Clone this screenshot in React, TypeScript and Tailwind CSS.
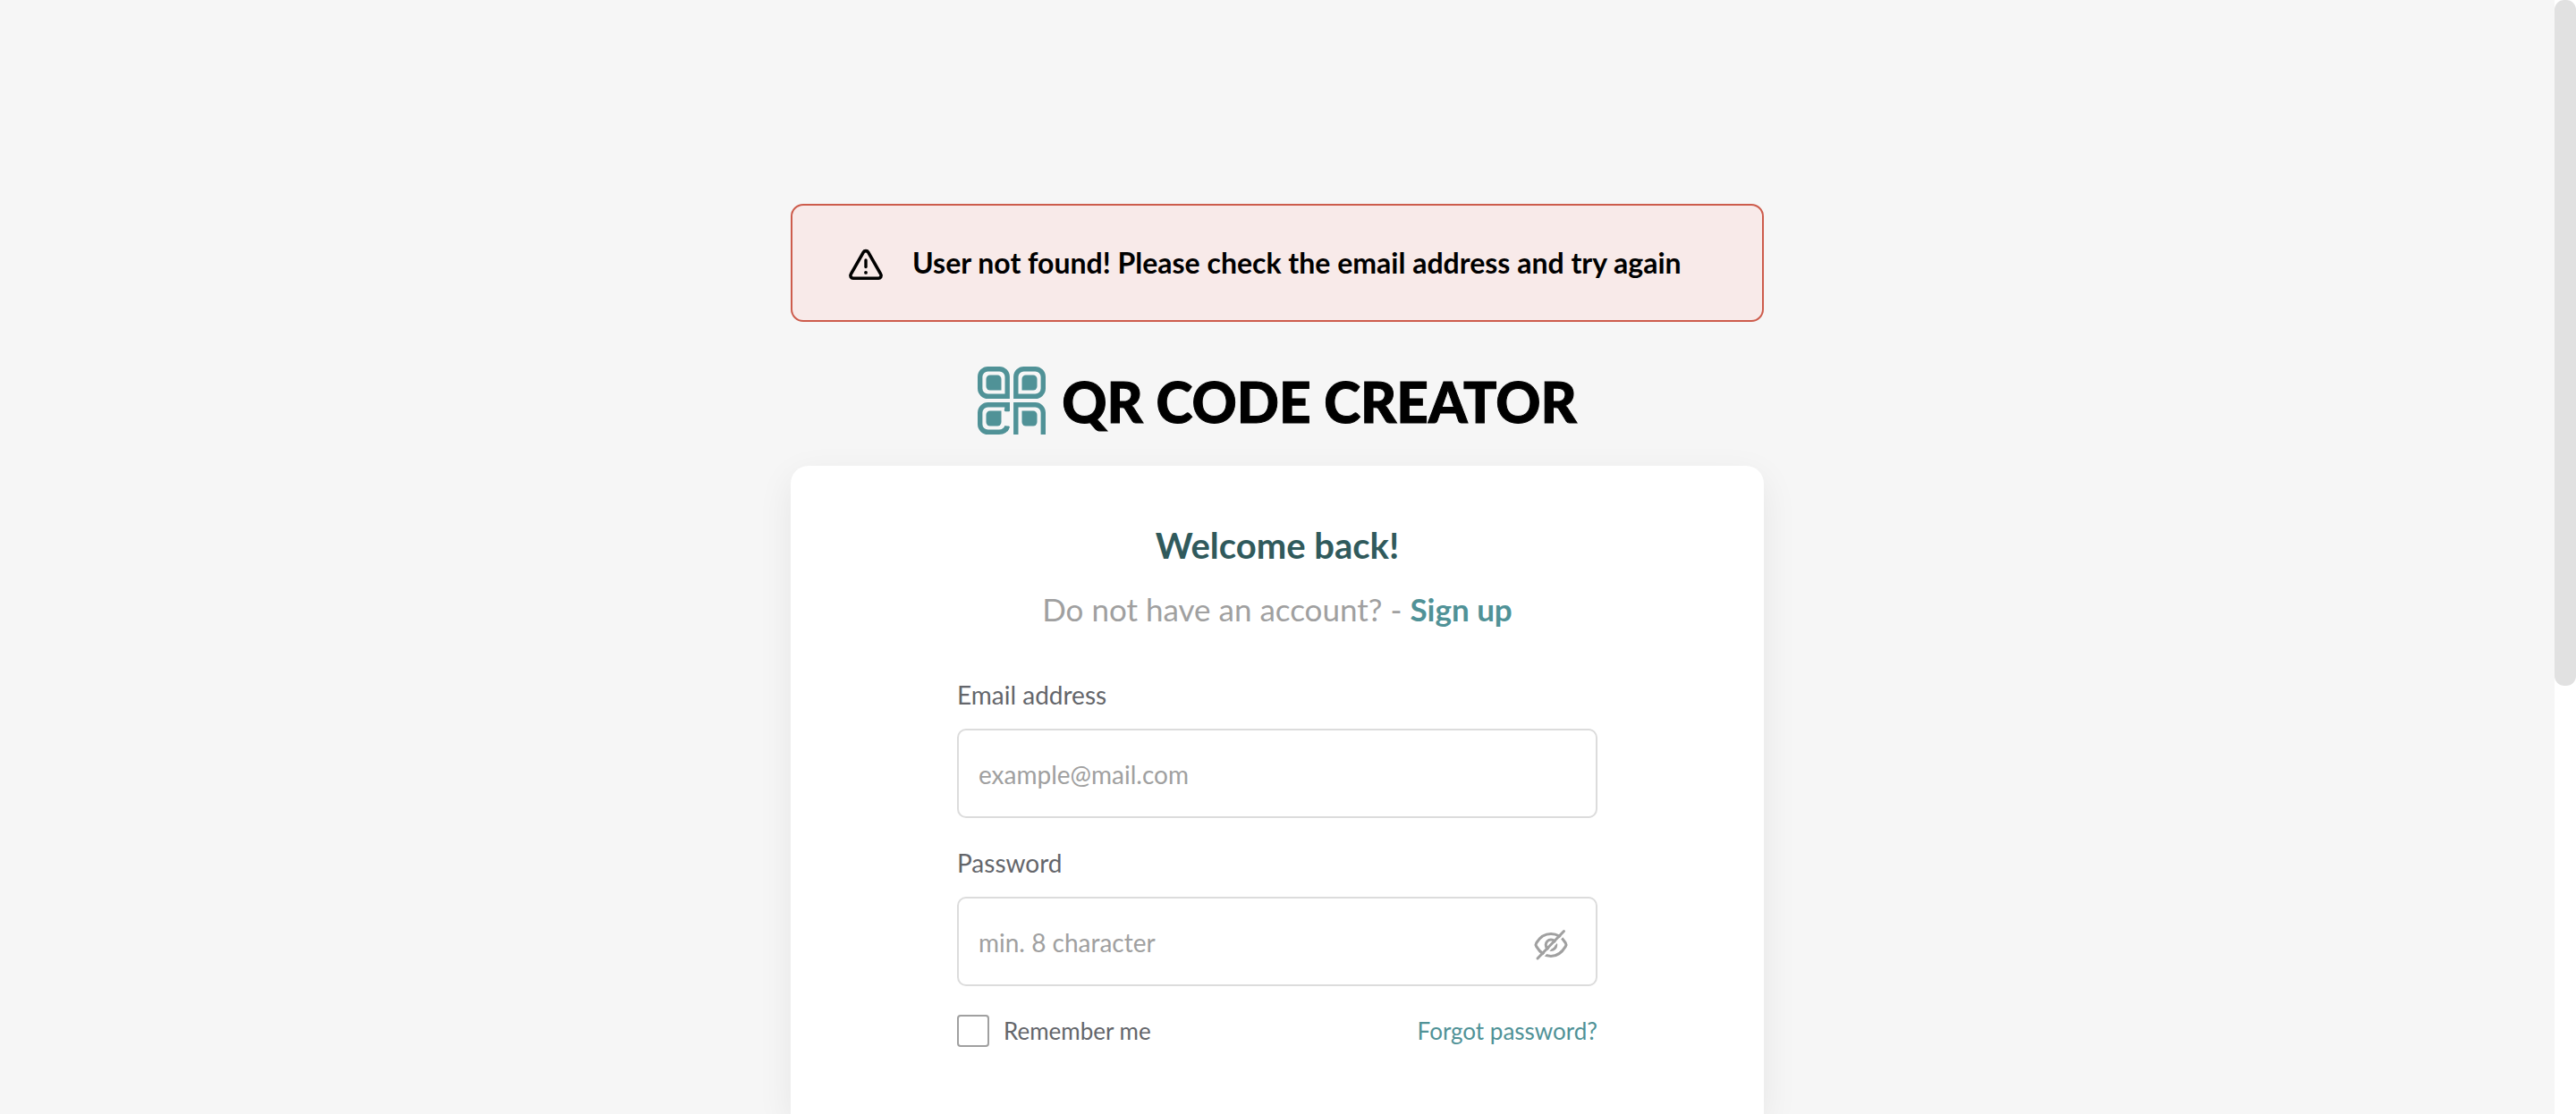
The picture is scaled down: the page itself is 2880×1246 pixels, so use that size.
import { useState } from "react";

function WarningIcon() {
  return (
    <svg viewBox="0 -2 48 48" className="size-12 shrink-0" fill="none" stroke="currentColor" strokeLinecap="round" strokeLinejoin="round" aria-hidden="true">
      <path d="M21.3 10.2 7.3 34.6a3 3 0 0 0 2.7 4.6h28a3 3 0 0 0 2.7-4.6L26.7 10.2a3.1 3.1 0 0 0-5.4 0Z" strokeWidth="3.6" />
      <path d="M24 19v7.6" strokeWidth="3.4" />
      <path d="M24 32.8v.1" strokeWidth="3.8" />
    </svg>
  );
}

function LogoMark() {
  return (
    <svg viewBox="0 0 76 76" className="size-[76px] shrink-0" fill="#509297" aria-hidden="true">
      <g fill="none" stroke="#509297" strokeWidth="5.4">
        <path d="M33.2 33.3V11.500a8.800 8.800 0 0 0-8.800-8.800H11.500A8.800 8.800 0 0 0 2.700 11.500v13a8.800 8.800 0 0 0 8.800 8.800Z" />
        <path d="M42.8 33.3V11.500a8.800 8.800 0 0 1 8.800-8.800H64.500a8.800 8.800 0 0 1 8.800 8.800v13a8.800 8.800 0 0 1-8.800 8.800Z" />
        <path d="M42.8 76V42.8H64.500a8.800 8.800 0 0 1 8.800 8.800V76" />
        <path d="M36 42.8H11.500a8.800 8.800 0 0 0-8.800 8.800V64.500a8.800 8.800 0 0 0 8.800 8.800h12.500c4.500 0 7.600-2.300 9-6.300" />
      </g>
      <path d="M30.500 44H36v5.200a1 1 0 0 1-1 1h-3.600c-1.800 0-1.800-1.800-1.300-3Z" />
      <path d="M31.500 66.500h3a1.200 1.200 0 0 1 1.200 1.600c-.6 2-1.300 3.200-2.400 4.300l-3.800-3.400Z" />
      <path d="M26.500 26.500H14a4.500 4.500 0 0 1-4.500-4.500V14a4.500 4.500 0 0 1 4.500-4.500h8a4.500 4.500 0 0 1 4.500 4.500Z" />
      <path d="M49.500 26.500H62a4.500 4.500 0 0 0 4.500-4.500V14a4.500 4.500 0 0 0-4.500-4.500h-8a4.500 4.500 0 0 0-4.500 4.500Z" />
      <path d="M26.500 49.500H14a4.500 4.500 0 0 0-4.500 4.500v8a4.500 4.500 0 0 0 4.500 4.500h8a4.500 4.500 0 0 0 4.500-4.500Z" />
      <path d="M49.500 49.500H62a4.500 4.500 0 0 1 4.500 4.500v8a4.500 4.500 0 0 1-4.500 4.500h-8a4.500 4.500 0 0 1-4.500-4.500Z" />
    </svg>
  );
}

function EyeOffIcon() {
  return (
    <svg viewBox="0 0 44 42" className="h-[42px] w-11" fill="none" stroke="currentColor" strokeWidth="3" strokeLinecap="round" strokeLinejoin="round" aria-hidden="true">
      <mask id="slash-gap" maskUnits="userSpaceOnUse" x="0" y="0" width="44" height="42">
        <rect width="44" height="42" fill="white" stroke="none" />
        <path d="M9 38 38.500 7.500" stroke="black" strokeWidth="2" />
      </mask>
      <g mask="url(#slash-gap)">
        <path d="M5.700 22.600q-1.300-2 0-4C10 11.500 15 8.500 22 8.500s12 3 16.300 10.100q1.300 2 0 4C34 29.700 29 33.500 22 33.500S10 29.700 5.700 22.600Z" />
        <circle cx="22" cy="20.800" r="5.800" />
      </g>
      <path d="M7 36 36.500 5.500" />
    </svg>
  );
}

const fieldClass =
  "h-[100px] w-full rounded-[10px] border-2 border-[#dcdcdc] bg-white pt-0.5 pl-[22px] text-[28px] text-[#64666b] outline-none placeholder:text-[#a0a0a0]";

export default function App() {
  const [visible, setVisible] = useState(false);

  return (
    <div className="flex h-screen overflow-hidden bg-[#f6f6f6] font-['Lato',sans-serif]">
      <main className="flex min-w-0 flex-1 flex-col items-center pt-[228px]">
        <div role="alert" className="flex min-h-[132px] w-full max-w-[1088px] shrink-0 items-center gap-7 rounded-[14px] border-2 border-[#cd5c4c] bg-[#f8eae9] px-[58px] text-black">
          <WarningIcon />
          <p className="text-[32px] leading-10 font-bold">User not found! Please check the email address and try again</p>
        </div>

        <div className="mt-[50px] flex shrink-0 items-center gap-[18px]">
          <LogoMark />
          <span className="pt-0.5 text-[62px] leading-[74px] font-black text-black [-webkit-text-stroke:1px_#000]">QR CODE CREATOR</span>
        </div>

        <section className="mt-[35px] flex w-full max-w-[1088px] flex-1 flex-col items-center rounded-t-[20px] bg-white px-[186px] pt-[63px] shadow-[0_12px_40px_rgba(0,0,0,0.07)]">
          <h1 className="text-[40px] leading-[52px] font-bold text-[#305a5c]">Welcome back!</h1>
          <p className="mt-[21px] text-[35px] leading-[48px] text-[#a0a0a0]">
            Do not have an account? - <a href="#signup" className="font-bold text-[#509297]">Sign up</a>
          </p>

          <form className="mt-[54px] flex w-full flex-col" onSubmit={(event) => event.preventDefault()}>
            <label htmlFor="email" className="text-[28px] leading-9 text-[#64666b]">Email address</label>
            <input id="email" type="email" placeholder="example@mail.com" className={"mt-5 pr-[22px] " + fieldClass} />

            <label htmlFor="password" className="mt-8 text-[28px] leading-9 text-[#64666b]">Password</label>
            <div className="relative mt-5">
              <input id="password" type={visible ? "text" : "password"} placeholder="min. 8 character" className={"pr-24 " + fieldClass} />
              <button type="button" aria-label="Show password" aria-pressed={visible} onClick={() => setVisible(!visible)} className="absolute inset-y-0 right-[30px] flex items-center pt-2 text-[#a0a0a0]">
                <EyeOffIcon />
              </button>
            </div>

            <div className="mt-8 flex items-center justify-between text-[26px] leading-9">
              <label htmlFor="remember" className="flex items-center gap-4 text-[#64666b]">
                <input id="remember" type="checkbox" className="size-9 appearance-none rounded-[4px] border-2 border-[#a0a0a0] bg-white checked:bg-[#509297]" />
                Remember me
              </label>
              <a href="#forgot" className="text-[#509297]">Forgot password?</a>
            </div>
          </form>
        </section>
      </main>

      <div className="w-6 shrink-0 bg-white" aria-hidden="true">
        <div className="h-[767px] rounded-[11px] bg-[#e1e1e1]" />
      </div>
    </div>
  );
}
